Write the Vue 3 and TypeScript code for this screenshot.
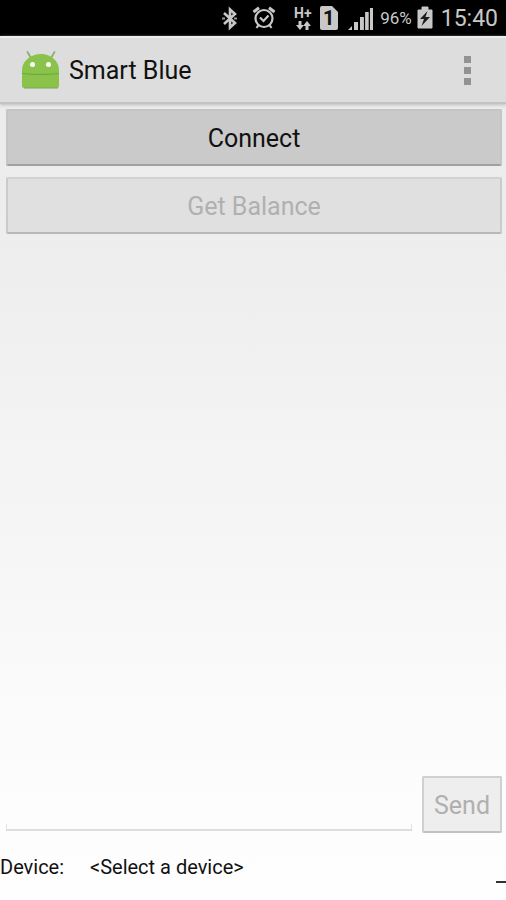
<script setup lang="ts">
import { ref } from 'vue'

const message = ref('')
const battery = 96
const time = '15:40'
const connected = ref(false)
const device = ref('<Select a device>')
</script>

<template>
  <div class="screen">
    <header class="status">
      <svg class="icon" width="27" height="36" viewBox="0 0 27 36" aria-label="Bluetooth">
        <path d="M3 13L14 23L9 27.500V9.500L14 14L3 24" fill="none" stroke="#c8c8c8" stroke-width="2.600" />
        <path d="M1 18.500h3M13 18.500h3" stroke="#999" stroke-width="2" />
      </svg>
      <svg class="icon" width="37" height="36" viewBox="0 0 37 36" aria-label="Alarm">
        <g fill="none" stroke="#c8c8c8" stroke-width="2.200">
          <circle cx="12" cy="18.500" r="8.500" />
          <path d="M1.500 12L7 7.800M22.500 12L17 7.800" stroke-width="3" />
          <path d="M8 17.500L11.500 21L16.500 15.500" />
          <path d="M6.500 25L4.500 28M17.500 25L19.500 28" />
        </g>
      </svg>
      <svg class="icon" width="22" height="36" viewBox="0 0 22 36" aria-label="Mobile data">
        <text x="1" y="18" class="net">H+</text>
        <path d="M5.500 21h3v4h2.500l-4 5l-4-5h2.500zM12.500 30h3v-4h2.500l-4-5l-4 5h2.500z" fill="#c8c8c8" />
      </svg>
      <svg class="icon" width="25" height="36" viewBox="0 0 25 36" aria-label="SIM 1">
        <path d="M3 6h10L19 12V28q0 2-2 2H3q-2 0-2-2V8q0-2 2-2z" fill="#c8c8c8" />
        <text x="4" y="25" class="sim">1</text>
      </svg>
      <svg class="icon" width="28" height="36" viewBox="0 0 28 36" aria-label="Signal">
        <path d="M0 30L4 26V30zM6 22h4v8H6zM12 17h4v13h-4zM17 12h4v18h-4zM21.500 8h3.500v22h-3.500z" fill="#c8c8c8" />
        <path d="M5 20v10M11 16v14M16.500 12v18M21.300 8v22" stroke="#000" stroke-width="1.200" />
      </svg>
      <span class="percent">{{ battery }}%</span>
      <svg class="icon" width="21" height="36" viewBox="0 0 21 36" aria-label="Charging">
        <path d="M6 7h6v3h4v18H2V10h4z" fill="#c8c8c8" stroke="#c8c8c8" stroke-linejoin="round" />
        <path d="M11.500 11L4 19h4l-2.500 7L14 17h-4.500z" fill="#1c1c1c" />
      </svg>
      <time class="clock">{{ time }}</time>
    </header>

    <div class="bar">
      <svg class="robot" width="38" height="40" viewBox="0 0 38 40" aria-hidden="true">
        <path d="M9.500 9L5.500 2M28.500 9L32.500 2" stroke="#8fae70" stroke-width="1.800" stroke-linecap="round" />
        <path d="M0 24V20C0 11 9 4 19 4S37 11 37 20V24z" fill="#89c34c" />
        <path d="M0 23H37V36Q37 38 35 38H2Q0 38 0 36z" fill="#8bc34a" />
        <path d="M0 23.500C10 24.500 28 24.500 37 23.500" fill="none" stroke="#70a53b" stroke-width="1.200" />
        <path d="M2 38h34" stroke="#78a94b" />
        <circle cx="10.500" cy="14.500" r="2.500" fill="#fff" />
        <circle cx="26.500" cy="14.500" r="2.500" fill="#fff" />
      </svg>
      <h1 class="title">Smart Blue</h1>
      <button class="more" type="button" aria-label="More options">
        <i></i><i></i><i></i>
      </button>
    </div>

    <main class="body">
      <button class="btn primary" type="button" @click="connected = true">Connect</button>
      <button class="btn" type="button" :disabled="!connected">Get Balance</button>
      <form class="compose" @submit.prevent="message = ''">
        <div class="field">
          <input v-model="message" class="input" type="text" aria-label="Message" />
        </div>
        <button class="btn send" type="submit" :disabled="!connected">Send</button>
      </form>
    </main>

    <footer class="footer">
      <span class="label">Device:</span>
      <span>{{ device }}</span>
      <i class="dash"></i>
    </footer>
  </div>
</template>

<style>
body {
  margin: 0;
}
</style>

<style scoped>
.screen {
  display: flex;
  flex-direction: column;
  min-height: 100vh;
  background: linear-gradient(#ebebeb 100px, #eeeeee 260px, #fdfdfd 800px, #fefefe);
  color: #111;
  font-family: Roboto, sans-serif;
}

.status {
  display: flex;
  align-items: center;
  justify-content: flex-end;
  gap: 4px;
  height: 36px;
  padding-right: 8px;
  background: #000;
  color: #c8c8c8;
}

.icon {
  flex: none;
}

.net {
  fill: #c8c8c8;
  font-size: 14px;
  font-weight: 700;
}

.sim {
  fill: #111;
  font-size: 20px;
  font-weight: 700;
}

.percent {
  font-size: 17px;
}

.clock {
  font-size: 23px;
}

.bar {
  display: flex;
  align-items: center;
  box-sizing: border-box;
  height: 68px;
  padding: 0 22px;
  border-top: 2px solid #ededed;
  border-bottom: 2px solid #c4c4c4;
  background: #dddddd;
  box-shadow: 0 1px 3px #bdbdbd;
}

.title {
  flex: 1;
  margin: 0 0 0 9px;
  font-size: 25px;
  font-weight: 400;
}

.more {
  display: flex;
  flex-direction: column;
  align-items: center;
  gap: 4px;
  width: 34px;
  padding: 8px 0;
  border: 0;
  background: none;
}

.more i {
  width: 7px;
  height: 7px;
  background: #929292;
}

.body {
  flex: 1;
  display: flex;
  flex-direction: column;
  gap: 11px;
  padding: 5px 4px 0 6px;
}

.btn {
  box-sizing: border-box;
  height: 57px;
  padding: 2px 10px 0;
  border: 2px solid #cbcbcb;
  border-top-color: #d2d2d2;
  border-bottom-color: #b8b8b8;
  border-radius: 2px;
  background: #e0e0e0;
  color: #b0b0b0;
  font-family: inherit;
  font-size: 25px;
}

.primary {
  border-color: #c5c5c5;
  border-bottom-color: #a0a0a0;
  background: #cacaca;
  color: #111;
}

.compose {
  display: flex;
  align-items: flex-end;
  gap: 10px;
  margin-top: auto;
}

.field {
  flex: 1;
  display: flex;
  height: 57px;
}

.input {
  flex: 1;
  align-self: stretch;
  min-width: 0;
  padding: 0 8px;
  border: 0;
  outline: 0;
  background:
    linear-gradient(#dedede, #dedede) left bottom 2px / 100% 2px no-repeat,
    linear-gradient(#e2e2e2, #e2e2e2) left bottom 2px / 1px 7px no-repeat,
    linear-gradient(#e2e2e2, #e2e2e2) right bottom 2px / 1px 7px no-repeat;
  font-family: inherit;
  font-size: 25px;
}

.send {
  width: 80px;
  padding: 2px 0 0;
  border-color: #d0d0d0;
  border-bottom-color: #c2c2c2;
  background: #eeeeee;
}

.footer {
  display: flex;
  align-items: center;
  height: 67px;
  font-size: 20px;
}

.label {
  width: 90px;
}

.dash {
  align-self: flex-end;
  width: 10px;
  height: 2px;
  margin: 0 0 17px auto;
  background: #333;
}
</style>
